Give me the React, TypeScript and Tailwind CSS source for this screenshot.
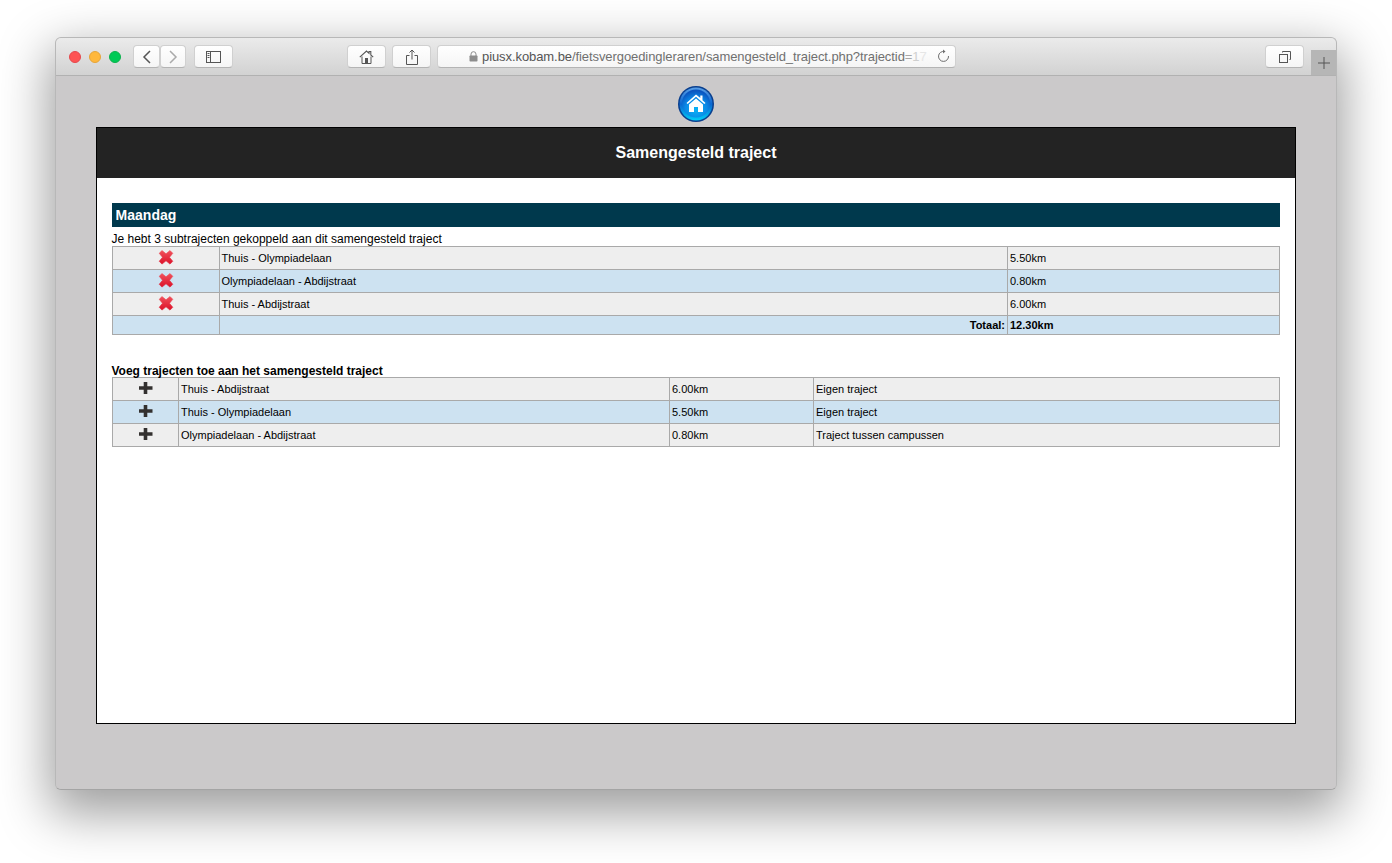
const FONT = 'font-["Liberation_Sans",Arial,sans-serif]'

function ToolButton({ className, children }: { className: string; children?: React.ReactNode }) {
    return (
        <div className={`h-[23px] flex items-center justify-center rounded-[4px] bg-gradient-to-b from-white to-[#f5f5f5] border border-[#d0d0d0] border-b-[#b4b4b4] ${className}`}>
            {children}
        </div>
    )
}

function RemoveIcon() {
    return (
        <svg width="16" height="16" viewBox="0 1 16 16" className="mx-auto block">
            <defs>
                <linearGradient id="red" x1="0" y1="0" x2="0" y2="1">
                    <stop offset="0" stopColor="#f0525c" />
                    <stop offset="1" stopColor="#dc1129" />
                </linearGradient>
            </defs>
            <path d="M4 1.500 8 4.800l4-3.300 2.800 2.800L11.500 8.300l3.300 4-2.800 2.800-4-3.300-4 3.300-2.800-2.800 3.300-4-3.300-4z" fill="url(#red)" stroke="url(#red)" strokeWidth="0.600" strokeLinejoin="round" />
        </svg>
    )
}

function AddIcon() {
    return (
        <svg width="14" height="14" viewBox="0.5 0 14 14" className="mx-auto block">
            <path d="M5.200 0h3.600v4.200H14v3.600H8.800V12H5.200V7.800H0V4.200h5.200z" fill="#33302f" />
        </svg>
    )
}

const cell = 'border border-[#a9a9a9] px-[2px] py-0 text-[11px] leading-[13px] text-black'

const linked = [
    ['Thuis - Olympiadelaan', '5.50km'],
    ['Olympiadelaan - Abdijstraat', '0.80km'],
    ['Thuis - Abdijstraat', '6.00km'],
]

const available = [
    ['Thuis - Abdijstraat', '6.00km', 'Eigen traject'],
    ['Thuis - Olympiadelaan', '5.50km', 'Eigen traject'],
    ['Olympiadelaan - Abdijstraat', '0.80km', 'Traject tussen campussen'],
]

function rowColour(i: number) {
    return i % 2 === 0 ? 'bg-[#eeeeee]' : 'bg-[#cde2f1]'
}

export default function App() {
    return (
        <div className={`${FONT} w-[1392px] h-[863px] bg-white overflow-hidden pt-[37px] pl-[55px]`}>
            <div className="w-[1282px] h-[753px] rounded-[6px] overflow-hidden flex flex-col shadow-[0_18px_50px_6px_rgba(0,0,0,0.38)] border border-[#b8b8b8] border-b-[#a4a4a4] bg-[#cbc9ca]">
                {/* toolbar */}
                <div className="h-[38px] shrink-0 flex items-start bg-gradient-to-b from-[#ebebeb] to-[#d2d2d2] border-b border-[#b1b1b1]">
                    <div className="flex gap-[8px] ml-[13px] mt-[13px]">
                        <div className="w-[12px] h-[12px] rounded-full bg-[#fd5454] border border-[#e5484d]" />
                        <div className="w-[12px] h-[12px] rounded-full bg-[#ffb83d] border border-[#e6a53a]" />
                        <div className="w-[12px] h-[12px] rounded-full bg-[#00ca56] border border-[#0cb14d]" />
                    </div>
                    <div className="flex ml-[12px] mt-[7px]">
                        <ToolButton className="w-[27px]">
                            <svg width="10" height="14" viewBox="0 0 10 14" fill="none" stroke="#555" strokeWidth="1.500">
                                <path d="M8 1 2 7l6 6" />
                            </svg>
                        </ToolButton>
                        <ToolButton className="w-[26px]">
                            <svg width="10" height="14" viewBox="0 0 10 14" fill="none" stroke="#aaa" strokeWidth="1.500">
                                <path d="m2 1 6 6-6 6" />
                            </svg>
                        </ToolButton>
                    </div>
                    <ToolButton className="w-[39px] ml-[8px] mt-[7px]">
                        <svg width="15" height="12" viewBox="0 0 15 12" fill="none" stroke="#555">
                            <rect x="0.500" y="0.500" width="14" height="11" />
                            <path d="M4.500 1v10M1.500 2.500h2M1.500 4.500h2M1.500 6.500h2" />
                        </svg>
                    </ToolButton>
                    <ToolButton className="w-[39px] ml-[114px] mt-[7px]">
                        <svg width="15" height="14" viewBox="0 0 15 14">
                            <path d="M.8 7.200 7.500 1l2.500 2.300V1.500h1.800v3.500l2.400 2.200" fill="none" stroke="#555" strokeWidth="1.100" />
                            <path d="M3 6.500v7h9v-7" fill="none" stroke="#555" />
                            <path d="M6 8h3v6H6z" fill="#555" />
                        </svg>
                    </ToolButton>
                    <ToolButton className="w-[39px] ml-[6px] mt-[7px]">
                        <svg width="12" height="16" viewBox="0 0 12 16" fill="none" stroke="#555">
                            <path d="M3.500 6.500H.5v9h11v-9h-3M6 10.500V1M3.500 3.500 6 1l2.500 2.500" />
                        </svg>
                    </ToolButton>
                    <ToolButton className="w-[519px] ml-[6px] mt-[7px] relative justify-start pl-[31px]">
                        <svg width="9" height="11" viewBox="0 0 9 11" className="mr-[4px] shrink-0">
                            <path d="M2 5V3.200a2.500 2.500 0 0 1 5 0V5" fill="none" stroke="#8d8d8d" />
                            <rect x="0.500" y="4.500" width="8" height="6" rx="0.800" fill="#8d8d8d" />
                        </svg>
                        <span className="text-[13px] leading-[15px] tracking-[-0.08px] text-[#555555] whitespace-nowrap">
                            piusx.kobam.be<span className="text-[#707070]">/fietsvergoedingleraren/samengesteld_traject.php?trajectid</span>
                            <span className="text-[#a8a8a8]">=</span>
                            <span className="text-[#cfcfcf]">1</span>
                            <span className="text-[#e6e6e6]">7</span>
                        </span>
                        <svg width="13" height="14" viewBox="0 0 13 14" fill="none" stroke="#6d6d6d" className="absolute right-[5px] top-[3px]">
                            <path d="M7.500 2.500A5 5 0 1 0 11.500 7" />
                            <path d="M6 .5l2.500 2L6 4.500" fill="#6d6d6d" stroke="none" />
                        </svg>
                    </ToolButton>
                    <ToolButton className="w-[39px] ml-[309px] mt-[7px]">
                        <svg width="12" height="12" viewBox="0 0 12 12" fill="none" stroke="#555">
                            <rect x="0.500" y="3.500" width="8" height="8" />
                            <path d="M3.500 1.500v-1h8v8h-1" />
                        </svg>
                    </ToolButton>
                    <div className="w-[25px] h-[25px] ml-[7px] mt-[12px] bg-[#b6b6b6] flex items-center justify-center">
                        <svg width="12" height="12" viewBox="0 0 12 12" stroke="#555">
                            <path d="M6 0v12M0 6h12" />
                        </svg>
                    </div>
                </div>

                {/* page */}
                <div className="flex-1 flex flex-col items-center pt-[10px] bg-[#cbc9ca]">
                    <svg width="36" height="36" viewBox="0 0 36 36" className="shrink-0">
                        <defs>
                            <radialGradient id="ball" cx="50%" cy="70%" r="65%">
                                <stop offset="0" stopColor="#08b4f7" />
                                <stop offset="0.600" stopColor="#0a88e6" />
                                <stop offset="1" stopColor="#0a55c0" />
                            </radialGradient>
                            <linearGradient id="glow" x1="0" y1="0" x2="0" y2="1">
                                <stop offset="0" stopColor="#5a9fe6" />
                                <stop offset="0.500" stopColor="#0a66d0" />
                                <stop offset="1" stopColor="#00cdf7" />
                            </linearGradient>
                        </defs>
                        <circle cx="18" cy="18" r="18" fill="#0a3f8e" />
                        <circle cx="18" cy="18" r="16.500" fill="url(#glow)" />
                        <circle cx="18" cy="17.500" r="14" fill="url(#ball)" />
                        <path d="M18 8.500 8.500 17l1.200 1.100L18 10.800l8.300 7.300 1.200-1.100-3-2.700V9.500h-2.200v2.500z" fill="#fff" />
                        <path d="M11 18.500 18 12.500l7 6V26h-5v-5h-4v5h-5z" fill="#fff" />
                    </svg>
                    <div className="mt-[5px] w-[1200px] h-[597px] bg-white border border-black text-black">
                        <div className="h-[50px] bg-[#232323] flex items-center justify-center text-[16px] font-bold text-white">
                            Samengesteld traject
                        </div>
                        <div className="px-[15px] pt-[25px]">
                            <div className="h-[24px] bg-[#00394d] text-white text-[14px] font-bold tracking-[0.03px] flex items-center pl-[3.500px]">
                                Maandag
                            </div>
                            <div className="text-[12px] leading-[14px] mt-[5px] -ml-[0.500px]">
                                Je hebt 3 subtrajecten gekoppeld aan dit samengesteld traject
                            </div>
                            <table className="border-collapse table-fixed w-[1168px]">
                                <colgroup>
                                    <col className="w-[107px]" />
                                    <col className="w-[788px]" />
                                    <col />
                                </colgroup>
                                <tbody>
                                    {linked.map(([name, km], i) => (
                                        <tr key={name} className={`h-[23px] ${rowColour(i)}`}>
                                            <td className={cell}><RemoveIcon /></td>
                                            <td className={`${cell} !pl-[1.500px]`}>{name}</td>
                                            <td className={cell}>{km}</td>
                                        </tr>
                                    ))}
                                    <tr className={`h-[19px] ${rowColour(1)}`}>
                                        <td className={cell} />
                                        <td className={`${cell} text-right font-bold`}>Totaal:</td>
                                        <td className={`${cell} font-bold`}>12.30km</td>
                                    </tr>
                                </tbody>
                            </table>
                            <div className="text-[12px] leading-[12px] font-bold mt-[30px] -ml-[0.500px]">
                                Voeg trajecten toe aan het samengesteld traject
                            </div>
                            <table className="border-collapse table-fixed w-[1168px]">
                                <colgroup>
                                    <col className="w-[66px]" />
                                    <col className="w-[491px]" />
                                    <col className="w-[144px]" />
                                    <col />
                                </colgroup>
                                <tbody>
                                    {available.map(([name, km, kind], i) => (
                                        <tr key={name} className={`h-[23px] ${rowColour(i)}`}>
                                            <td className={cell}><AddIcon /></td>
                                            <td className={cell}>{name}</td>
                                            <td className={cell}>{km}</td>
                                            <td className={cell}>{kind}</td>
                                        </tr>
                                    ))}
                                </tbody>
                            </table>
                        </div>
                    </div>
                </div>
            </div>
        </div>
    )
}
